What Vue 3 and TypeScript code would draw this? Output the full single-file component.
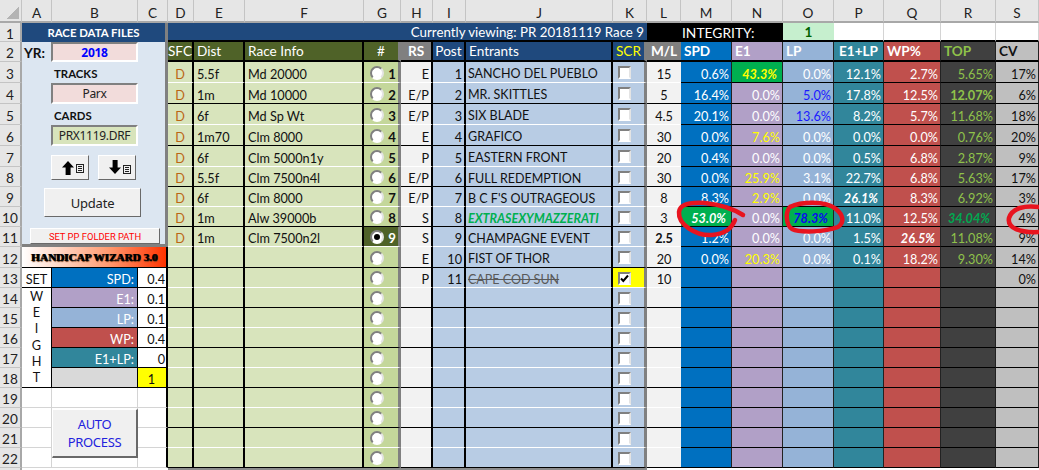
<script setup lang="ts">
type Cell = { c: string; t?: string; k?: 'radio' | 'radioOn' | 'check' | 'checked' };

const colLetters = 'ABCDEFGHIJKLMNOPQRS'.split('');

const rowsData: [string, string, string, string, string, string][] = [
  ['5.5f', 'Md 20000', 'E', '1', 'SANCHO DEL PUEBLO', '15'],
  ['1m', 'Md 10000', 'E/P', '2', 'MR. SKITTLES', '5'],
  ['6f', 'Md Sp Wt', 'E/P', '3', 'SIX BLADE', '4.5'],
  ['1m70', 'Clm 8000', 'E', '4', 'GRAFICO', '30'],
  ['6f', 'Clm 5000n1y', 'P', '5', 'EASTERN FRONT', '20'],
  ['5.5f', 'Clm 7500n4l', 'E/P', '6', 'FULL REDEMPTION', '30'],
  ['6f', 'Clm 8000', 'E/P', '7', "B C F'S OUTRAGEOUS", '8'],
  ['1m', 'Alw 39000b', 'S', '8', 'EXTRASEXYMAZZERATI', '3'],
  ['1m', 'Clm 7500n2l', 'S', '9', 'CHAMPAGNE EVENT', '2.5'],
  ['', '', 'E', '10', 'FIST OF THOR', '20'],
  ['', '', 'P', '11', 'CAPE COD SUN', '10'],
];

const metrics: Record<string, string[]> = {
  spd: ['0.6%', '16.4%', '20.1%', '0.0%', '0.4%', '0.0%', '8.3%', '53.0%', '1.2%', '0.0%', ''],
  e1: ['43.3%', '0.0%', '0.0%', '7.6%', '0.0%', '25.9%', '2.9%', '0.0%', '0.0%', '20.3%', ''],
  lp: ['0.0%', '5.0%', '13.6%', '0.0%', '0.0%', '3.1%', '0.0%', '78.3%', '0.0%', '0.0%', ''],
  el: ['12.1%', '17.8%', '8.2%', '0.0%', '0.5%', '22.7%', '26.1%', '11.0%', '1.5%', '0.1%', ''],
  wp: ['2.7%', '12.5%', '5.7%', '0.0%', '6.8%', '6.8%', '8.3%', '12.5%', '26.5%', '18.2%', ''],
  top: ['5.65%', '12.07%', '11.68%', '0.76%', '2.87%', '5.63%', '6.92%', '34.04%', '11.08%', '9.30%', ''],
  cv: ['17%', '6%', '18%', '20%', '9%', '17%', '3%', '4%', '9%', '14%', '0%'],
};

// extra class for a metric cell, keyed "column:row"
const accents: Record<string, string> = {
  'e1:0': 'hi-yellow', 'e1:3': 'yel', 'e1:5': 'yel', 'e1:6': 'yel', 'e1:9': 'yel',
  'lp:1': 'blu', 'lp:2': 'blu', 'lp:7': 'hi-blue',
  'spd:7': 'hi-white', 'el:6': 'bi', 'wp:8': 'bi',
  'top:1': 'bold', 'top:7': 'top-hi',
};

const wizard: [string, string, string][] = [
  ['w-spd', 'SPD:', '0.4'],
  ['w-e1', 'E1:', '0.1'],
  ['w-lp', 'LP:', '0.1'],
  ['w-wp', 'WP:', '0.4'],
  ['w-el', 'E1+LP:', '0'],
  ['w-none', '', '1'],
];

const cells: Cell[] = [];
cells.push({ c: 'corner' });
colLetters.forEach((l) => cells.push({ c: 'ch', t: l }));

// row 1
cells.push({ c: 'rh', t: '1' });
cells.push({ c: 'title-left s3', t: 'RACE DATA FILES' });
cells.push({ c: 'title-right s8', t: 'Currently viewing: PR 20181119 Race 9' });
cells.push({ c: 'integrity s3', t: 'INTEGRITY:' });
cells.push({ c: 'int-val', t: '1' });
for (let i = 0; i < 4; i++) cells.push({ c: 'blank-top' });

// row 2
cells.push({ c: 'rh', t: '2' });
[
  ['h-olive thick ctr', 'SFC'], ['h-olive thick', 'Dist'], ['h-olive thick', 'Race Info'],
  ['h-olive sep-g ctr', '#'], ['h-gray thick ctr', 'RS'], ['h-navy thick ctr', 'Post'],
  ['h-navy thick', 'Entrants'], ['h-navy sep-g ctr yel', 'SCR'], ['h-gray ctr', 'M/L'],
  ['h-m spd', 'SPD'], ['h-m e1', 'E1'], ['h-m lp', 'LP'], ['h-m el ctr', 'E1+LP'],
  ['h-m wp', 'WP%'], ['h-m top', 'TOP'], ['h-m cv', 'CV'],
].forEach(([c, t]) => cells.push({ c, t }));

for (let r = 3; r <= 22; r++) {
  const i = r - 3;
  const d = rowsData[i] ?? ['', '', '', '', '', ''];
  const line = r % 2 === 0 ? 'ln-b' : 'ln-w';
  cells.push({ c: 'rh', t: String(r) });

  if (r === 12) cells.push({ c: 'wiz-title s3', t: 'HANDICAP WIZARD 3.0' });
  if (r === 13) cells.push({ c: 'set', t: 'SET' });
  if (r === 14) cells.push({ c: 'weight' });
  if (r >= 13 && r <= 18) {
    const w = wizard[r - 13];
    cells.push({ c: 'wiz-label ' + w[0], t: w[1] });
    cells.push({ c: 'wiz-val' + (r === 18 ? ' wiz-sum' : ''), t: w[2] });
  }
  if (r >= 19) {
    cells.push({ c: 'plain' });
    cells.push({ c: 'plain' });
    cells.push({ c: 'plain edge' });
  }

  cells.push({ c: `g1 thick ctr sfc ${line}`, t: d[0] ? 'D' : '' });
  cells.push({ c: `g1 thick ${line}`, t: d[0] });
  cells.push({ c: `g1 thick ${line}`, t: d[1] });
  const sel = r === 11;
  cells.push({
    c: `${sel ? 'g3' : 'g2'} sep-g num ${line}`,
    t: r <= 11 ? String(r - 2) : '',
    k: sel ? 'radioOn' : 'radio',
  });
  cells.push({ c: `rs thick rt ${line}`, t: d[2] });
  cells.push({ c: `bl thick rt ${line}`, t: d[3] });
  const ent = r === 10 ? 'win' : r === 13 ? 'scr' : '';
  cells.push({ c: `bl thick ent ${ent} ${line}`, t: d[4] });
  cells.push({
    c: `${r === 13 ? 'ky' : 'bl'} sep-g cb ${line}`,
    k: r === 13 ? 'checked' : 'check',
  });
  cells.push({ c: `rs ctr ml ${r === 11 ? 'bold' : ''} ${line}`, t: d[5] });

  Object.keys(metrics).forEach((k) => {
    const t = metrics[k][i] ?? '';
    cells.push({ c: `m ${k} ${accents[`${k}:${i}`] ?? ''}`, t });
  });
}

cells.push({ c: 'rh-end' });
cells.push({ c: 'bot-w s3' });
cells.push({ c: 'bot-g s8' });
cells.push({ c: 'bot-w s8' });
</script>

<template>
  <div class="sheet">
    <div class="panel">
      <div class="p-row">
        <span class="yr">YR:</span>
        <div class="box pink yr-val">2018</div>
      </div>
      <div class="p-label">TRACKS</div>
      <div class="p-box-row"><div class="box pink">Parx</div></div>
      <div class="p-label">CARDS</div>
      <div class="p-box-row"><div class="box green">PRX1119.DRF</div></div>
      <div class="arrows">
        <button class="btn arrow-btn">
          <svg width="24" height="16" viewBox="0 0 24 16">
            <path d="M7 1 L13 7.5 H9.6 V15 H4.6 V7.5 H1 Z" fill="#000" />
            <rect x="15.5" y="4.5" width="7" height="8" fill="none" stroke="#222" />
            <path d="M17 6.5 h4 M17 8.5 h4 M17 10.5 h4" stroke="#222" />
          </svg>
        </button>
        <button class="btn arrow-btn">
          <svg width="24" height="16" viewBox="0 0 24 16">
            <path d="M7 14 L13 7.5 H9.6 V0 H4.6 V7.5 H1 Z" fill="#000" />
            <rect x="15.5" y="5.5" width="7" height="8" fill="none" stroke="#222" />
            <path d="M17 7.5 h4 M17 9.5 h4 M17 11.5 h4" stroke="#222" />
          </svg>
        </button>
      </div>
      <button class="btn update">Update</button>
      <button class="btn folder">SET PP FOLDER PATH</button>
    </div>

    <div v-for="(cell, i) in cells" :key="i" class="cell" :class="cell.c">
      <span v-if="cell.k === 'radio' || cell.k === 'radioOn'" class="radio" :class="{ on: cell.k === 'radioOn' }"></span>
      <span v-if="cell.k === 'check' || cell.k === 'checked'" class="checkbox">
        <svg v-if="cell.k === 'checked'" width="9" height="9" viewBox="0 0 9 9">
          <path d="M1 4.5 L3.3 7 L8 1.5" fill="none" stroke="#000" stroke-width="2" />
        </svg>
      </span>
      <span v-if="cell.c === 'weight'" class="weight-col">
        <span>W</span><span>E</span><span>I</span><span>G</span><span>H</span><span>T</span>
      </span>
      <span v-if="cell.t" class="txt">{{ cell.t }}</span>
    </div>

    <button class="btn auto">AUTO<br />PROCESS</button>

    <svg class="ink" width="1039" height="470" viewBox="0 0 1039 470">
      <g fill="none" stroke="#e8141f" stroke-width="4.5" stroke-linecap="round">
        <path d="M743 215 C735 210 725 205 705 203 C690 202 680 204 679 212 C678 224 695 236 712 235 C725 234 732 228 735 220" />
        <path d="M790 207 C800 202 825 200 836 209 C843 215 845 222 838 227 C825 232 800 233 792 229 C786 225 785 212 790 207" />
        <path d="M1039 207 C1025 205 1012 208 1009 218 C1007 228 1020 233 1039 232" />
      </g>
    </svg>
  </div>
</template>

<style scoped>
.sheet {
  position: relative;
  width: 1039px;
  height: 470px;
  overflow: hidden;
  background: #fff;
  display: grid;
  grid-template-columns: 22px 30px 86px 30px 26px 51px 119px 37px 32px 33px 147px 34px 34px 51px 51px 51px 50px 57px 55px 43px;
  grid-template-rows: 23px 19px 20px 21px 21px 21px 21px 21px 20px 20px 20px 20px 21px repeat(10, 20px) 2px;
  font-family: Lato, "Liberation Sans", sans-serif;
  font-size: 12.7px;
  color: #111;
}
.cell {
  box-sizing: border-box;
  display: flex;
  align-items: center;
  padding: 0 3px;
  white-space: nowrap;
  overflow: hidden;
  min-width: 0;
  min-height: 0;
}
.rh .txt, .g1 .txt, .g2 .txt, .g3 .txt, .rs .txt, .bl .txt, .m .txt,
.set .txt, .wiz-label .txt, .wiz-val .txt {
  margin-top: 3px;
}
.s3 { grid-column: span 3; }
.s8 { grid-column: span 8; }

.corner {
  background: #e6e6e6;
  border-right: 1px solid #c4c4c4;
  border-bottom: 2px solid #a8a8a8;
  justify-content: flex-end;
  align-items: flex-end;
  padding: 0 2px 2px 0;
}
.corner::after {
  content: "";
  width: 12px;
  height: 12px;
  background: linear-gradient(135deg, transparent 50%, #b4b4b4 50%);
}
.ch {
  background: #e6e6e6;
  justify-content: center;
  border-right: 1px solid #c4c4c4;
  border-bottom: 2px solid #a8a8a8;
  color: #222;
  padding: 4px 0 0;
  font-size: 13.6px;
}
.rh {
  grid-column: 1;
  background: #e6e6e6;
  justify-content: center;
  border-right: 2px solid #a8a8a8;
  border-bottom: 1px solid #c4c4c4;
  color: #222;
  padding: 0;
  font-size: 13.6px;
}
.rh-end {
  grid-column: 1;
  background: #e6e6e6;
  border-right: 2px solid #a8a8a8;
  padding: 0;
}
.bot-w { background: #fff; padding: 0; }
.bot-g { background: #8c8c8c; padding: 0; }

.title-left {
  background: #1f497d;
  color: #fff;
  font-weight: 700;
  font-size: 11.4px;
  justify-content: center;
  border-right: 3px solid #808080;
}
.title-right {
  background: #1f497d;
  color: #fff;
  font-size: 13.3px;
  justify-content: flex-end;
  border-bottom: 2px solid #000;
}
.integrity {
  background: #000;
  color: #fff;
  padding-left: 35px;
  font-size: 13.8px;
}
.int-val {
  background: #c6efce;
  color: #006100;
  font-weight: 700;
  font-size: 13.6px;
  justify-content: center;
  border-bottom: 2px solid #000;
}
.blank-top {
  background: #fff;
  border-right: 1px solid #d4d4d4;
  border-bottom: 2px solid #000;
}

.thick { border-right: 2px solid #000; }
.sep-g { border-right: 3px solid #808080; }
.ctr { justify-content: center; }
.rt { justify-content: flex-end; }
.yel { color: #ffff00; }
.bold { font-weight: 700; }

.h-olive, .h-gray, .h-navy, .h-m { color: #fff; border-bottom: 2px solid #000; font-size: 13.6px; }
.h-olive { background: #4f6228; }
.h-gray { background: #808080; font-weight: 700; }
.h-navy { background: #1f497d; }
.h-navy.yel { color: #ffff00; }
.h-m { font-weight: 700; border-right: 1px solid #222; }

.ln-b { border-bottom: 1px solid #000; }
.ln-w { border-bottom: 1px solid #fff; }
.g1 { background: #d8e4bc; }
.g2 { background: #c4d79b; }
.g3 { background: #4f6228; color: #fff; }
.sfc { color: #bb6614; }
.num {
  justify-content: space-between;
  padding: 0 2px 0 6px;
  font-weight: 700;
  font-size: 13.2px;
}
.rs { background: #f2f2f2; }
.bl { background: #b8cce4; }
.ky { background: #ffff00; }
.rt { padding-right: 2px; }
.ent { padding-left: 2px; font-size: 12.5px; }
.win { color: #00b050; font-weight: 700; font-style: italic; }
.scr { color: #595959; text-decoration: line-through; }
.cb { padding: 0 0 0 5px; }

.m {
  justify-content: flex-end;
  color: #fff;
  border-right: 1px solid #222;
  border-bottom: 1px solid #000;
  padding: 0 2px 0 0;
}
.h-m { justify-content: flex-start; }
.h-m.ctr { justify-content: center; }
.spd { background: #0070c0; }
.e1 { background: #b1a0c7; }
.lp { background: #95b3d7; }
.el { background: #31869b; }
.wp { background: #c0504d; }
.top { background: #404040; color: #8fc24a; }
.cv { background: #bfbfbf; color: #111; }
.m.e1.yel { color: #ffff00; }
.m.lp.blu { color: #1a1aff; }
.hi-yellow, .hi-blue, .hi-white { background: #00b050; font-weight: 700; font-style: italic; }
.hi-yellow { color: #ffff00; padding-right: 5px; }
.hi-blue { color: #0a0aee; padding-right: 5px; }
.hi-white { color: #fff; padding-right: 5px; }
.bi { font-weight: 700; font-style: italic; padding-right: 5px; }
.top-hi { color: #00a850; font-weight: 700; font-style: italic; padding-right: 5px; }

.radio, .checkbox {
  margin-top: 1px;
}
.radio {
  box-sizing: border-box;
  width: 14px;
  height: 14px;
  border-radius: 50%;
  background: #fff;
  border: 2px solid;
  border-color: #808080 #e4e4e4 #fff #808080;
  flex: none;
  display: flex;
  align-items: center;
  justify-content: center;
}
.radio.on::after {
  content: "";
  width: 6px;
  height: 6px;
  border-radius: 50%;
  background: #000;
}
.checkbox {
  box-sizing: border-box;
  width: 13px;
  height: 13px;
  background: #fff;
  border: 2px solid;
  border-color: #808080 #e4e4e4 #fff #808080;
  flex: none;
  display: flex;
  align-items: center;
  justify-content: center;
}

.panel {
  grid-column: 2 / 5;
  grid-row: 3 / 13;
  box-sizing: border-box;
  background: #dce6f1;
  border-right: 3px solid #808080;
  border-bottom: 3px solid #808080;
  display: flex;
  flex-direction: column;
}
.p-row { display: flex; height: 20px; align-items: stretch; flex: none; }
.yr { width: 29px; padding: 3px 0 0 2px; box-sizing: border-box; font-weight: 700; font-size: 13.6px; }
.p-label { height: 21px; padding: 5px 0 0 32px; box-sizing: border-box; font-weight: 700; font-size: 11.4px; flex: none; }
.p-box-row { height: 21px; padding-left: 29px; display: flex; flex: none; }
.box {
  box-sizing: border-box;
  width: 87px;
  border: 2px solid;
  border-color: #808080 #fff #fff #808080;
  display: flex;
  align-items: center;
  justify-content: center;
  font-family: "Noto Sans", sans-serif;
  font-size: 12px;
  letter-spacing: -0.3px;
  color: #222;
}
.pink { background: #f2dcdb; }
.green { background: #d8e4bc; }
.yr-val { color: #0000ff; font-weight: 700; }

.btn {
  box-sizing: border-box;
  background: #f0f0f0;
  border: 1px solid;
  border-color: #fff #696969 #696969 #fff;
  font-family: "Noto Sans", sans-serif;
  padding: 0;
  margin: 0;
  display: flex;
  align-items: center;
  justify-content: center;
  flex: none;
}
.arrows {
  display: flex;
  gap: 9px;
  margin: 9px 0 0 29px;
  flex: none;
}
.arrow-btn { width: 38px; height: 25px; }
.arrow-btn svg { display: block; margin-left: 6px; }
.update {
  width: 97px;
  height: 29px;
  margin: 8px 0 0 22px;
  font-size: 13px;
  letter-spacing: -0.2px;
  color: #222;
}
.folder {
  width: 130px;
  height: 16px;
  margin: 11px 0 0 8px;
  font-family: Roboto, sans-serif;
  font-size: 9.4px;
  color: #ff0000;
}

.wiz-title {
  background: linear-gradient(90deg, #fff 0%, #ffd8c8 25%, #ff9a70 60%, #ff3300 100%);
  color: #000;
  font-family: "Liberation Serif", serif;
  font-weight: 700;
  font-size: 11.2px;
  justify-content: center;
  text-shadow: 1px 0 0 #000, 1px 1px 1px #6b3a1a;
  border-right: 2px solid #000;
  border-bottom: 1px solid #000;
  padding: 0;
}
.set {
  background: #fff;
  justify-content: center;
  border-right: 1px solid #000;
  border-bottom: 1px solid #000;
  padding: 0;
}
.weight {
  grid-row: span 5;
  background: #fff;
  border-right: 1px solid #000;
  border-bottom: 1px solid #000;
  padding: 0;
  justify-content: center;
}
.weight-col {
  height: 100%;
  display: flex;
  flex-direction: column;
  justify-content: space-around;
  align-items: center;
  padding: 0 0 2px;
  box-sizing: border-box;
}
.wiz-label {
  justify-content: flex-end;
  color: #fff;
  border-right: 1px solid #000;
  border-bottom: 1px solid #000;
}
.w-spd { background: #0070c0; }
.w-e1 { background: #b1a0c7; }
.w-lp { background: #95b3d7; }
.w-wp { background: #c0504d; }
.w-el { background: #31869b; }
.w-none { background: #d9d9d9; }
.wiz-val {
  background: #fff;
  justify-content: flex-end;
  border-right: 2px solid #000;
  border-bottom: 1px solid #000;
  padding: 0 1px 0 0;
}
.wiz-sum { background: #ffff00; justify-content: center; }
.plain {
  background: #fff;
  border-right: 1px solid #d4d4d4;
  border-bottom: 1px solid #d4d4d4;
}
.edge { border-right: 2px solid #000; }

.auto {
  position: absolute;
  left: 52px;
  top: 409px;
  width: 86px;
  height: 49px;
  color: #2222dd;
  font-size: 13px;
  letter-spacing: -0.3px;
  line-height: 18px;
  text-align: center;
  display: block;
  border-width: 1px 2px 2px 1px;
}
.ink {
  position: absolute;
  left: 0;
  top: 0;
  pointer-events: none;
}
</style>
